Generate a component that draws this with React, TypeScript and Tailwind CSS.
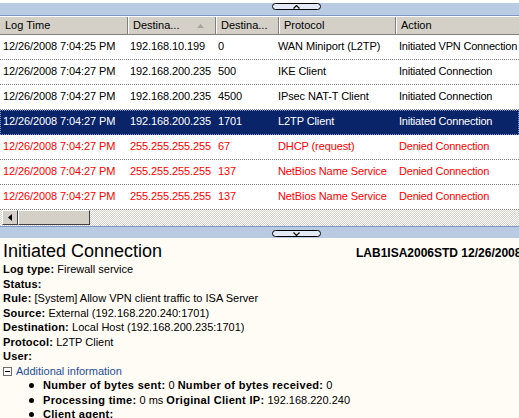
import React from "react";

type Row = {
  time: string;
  dest: string;
  port: string;
  proto: string;
  action: string;
  kind: "normal" | "selected" | "denied";
};

const rows: Row[] = [
  { time: "12/26/2008 7:04:25 PM", dest: "192.168.10.199", port: "0", proto: "WAN Miniport (L2TP)", action: "Initiated VPN Connection", kind: "normal" },
  { time: "12/26/2008 7:04:27 PM", dest: "192.168.200.235", port: "500", proto: "IKE Client", action: "Initiated Connection", kind: "normal" },
  { time: "12/26/2008 7:04:27 PM", dest: "192.168.200.235", port: "4500", proto: "IPsec NAT-T Client", action: "Initiated Connection", kind: "normal" },
  { time: "12/26/2008 7:04:27 PM", dest: "192.168.200.235", port: "1701", proto: "L2TP Client", action: "Initiated Connection", kind: "selected" },
  { time: "12/26/2008 7:04:27 PM", dest: "255.255.255.255", port: "67", proto: "DHCP (request)", action: "Denied Connection", kind: "denied" },
  { time: "12/26/2008 7:04:27 PM", dest: "255.255.255.255", port: "137", proto: "NetBios Name Service", action: "Denied Connection", kind: "denied" },
  { time: "12/26/2008 7:04:27 PM", dest: "255.255.255.255", port: "137", proto: "NetBios Name Service", action: "Denied Connection", kind: "denied" },
];

const details: [string, string][] = [
  ["Log type:", "Firewall service"],
  ["Status:", ""],
  ["Rule:", "[System] Allow VPN client traffic to ISA Server"],
  ["Source:", "External (192.168.220.240:1701)"],
  ["Destination:", "Local Host (192.168.200.235:1701)"],
  ["Protocol:", "L2TP Client"],
  ["User:", ""],
];

const extra: [string, string][][] = [
  [["Number of bytes sent:", "0"], ["Number of bytes received:", "0"]],
  [["Processing time:", "0 ms"], ["Original Client IP:", "192.168.220.240"]],
  [["Client agent:", ""]],
];

function Pill({ up }: { up: boolean }) {
  return (
    <div className="ml-[272px] mt-[3px] flex h-[7px] w-[49px] items-center justify-center rounded-full border border-black bg-[#e3eaf5]">
      <svg width="7" height="4" viewBox="0 0 7 4">
        {up ? (
          <polyline points="0.5,3.5 3.5,0.5 6.5,3.5" fill="none" stroke="#000" strokeWidth="1.2" />
        ) : (
          <polyline points="0.5,0.5 3.5,3.5 6.5,0.5" fill="none" stroke="#000" strokeWidth="1.2" />
        )}
      </svg>
    </div>
  );
}

function HeaderCell({ label, sorted, last }: { label: string; sorted?: boolean; last?: boolean }) {
  return (
    <div
      className={
        "flex items-center pl-[5px] " +
        (last ? "" : "border-r border-r-[#808080] shadow-[1px_0_0_#fff]")
      }
    >
      <span>{label}</span>
      {sorted && (
        <svg width="7" height="4" viewBox="0 0 7 4" className="ml-[18px]">
          <polygon points="0,4 3.5,0 7,4" fill="#a8a49c" />
        </svg>
      )}
    </div>
  );
}

export default function App() {
  return (
    <div className="h-[418px] w-[519px] overflow-hidden bg-white font-['Liberation_Sans',Arial,sans-serif] text-[11px] text-black">
      {/* top splitter */}
      <div className="h-[13px] border-b border-[#7d97c2] bg-[#b9cbe3]">
        <Pill up />
      </div>

      {/* column header */}
      <div className="grid h-[19px] grid-cols-[128px_88px_63px_117px_1fr] border-t border-t-white border-b border-b-[#808080] bg-[#d4d0c8]">
        <HeaderCell label="Log Time" />
        <HeaderCell label="Destina..." sorted />
        <HeaderCell label="Destina..." />
        <HeaderCell label="Protocol" />
        <HeaderCell label="Action" last />
      </div>

      {/* rows */}
      <div className="tracking-[-0.1px]">
        {rows.map((r, i) => (
          <div
            key={i}
            className={
              "grid h-[25px] grid-cols-[127px_88px_60px_121px_1fr] items-center whitespace-nowrap border-b border-dotted pb-[1px] " +
              (r.kind === "selected"
                ? "border-[#8090b0] bg-[#0a246a] text-white outline-1 -outline-offset-1 outline-dotted outline-[#8a96b8]"
                : r.kind === "denied"
                ? "border-[#808080] text-[#ff0000]"
                : "border-[#808080]")
            }
          >
            <span className="pl-[3px]">{r.time}</span>
            <span className="pl-[3px]">{r.dest}</span>
            <span className="pl-[3px]">{r.port}</span>
            <span className="pl-[3px]">{r.proto}</span>
            <span className="pl-[3px] tracking-[-0.2px]">{r.action}</span>
          </div>
        ))}
      </div>

      {/* horizontal scrollbar */}
      <div className="flex h-[16px] bg-[repeating-conic-gradient(#d4d0c8_0_25%,#ffffff_0_50%)] bg-[length:2px_2px] pl-[2px]">
        <div className="flex h-[15px] w-[16px] items-center justify-center border-t border-l border-t-white border-l-white border-r border-b border-r-[#404040] border-b-[#404040] bg-[#d4d0c8]">
          <svg width="4" height="7" viewBox="0 0 4 7">
            <polygon points="4,0 0,3.5 4,7" fill="#000" />
          </svg>
        </div>
        <div className="h-[15px] w-[72px] border-t border-l border-t-white border-l-white border-r border-b border-r-[#404040] border-b-[#404040] bg-[#d4d0c8]" />
      </div>

      {/* bottom splitter */}
      <div className="h-[12px] border-t border-[#7d97c2] bg-[#b9cbe3]">
        <Pill up={false} />
      </div>

      {/* detail pane */}
      <div className="h-[182px] overflow-hidden bg-[#fffbf5] pt-[2px]">
        <div className="flex items-baseline whitespace-nowrap">
          <div className="w-[356px] shrink-0 pl-[3px] text-[18px] leading-[22px]">Initiated Connection</div>
          <div className="shrink-0 text-[12px] font-bold">LAB1ISA2006STD 12/26/2008</div>
        </div>
        <div className="pl-[3px] leading-[14.55px]">
          {details.map(([label, value]) => (
            <div key={label} className="whitespace-nowrap">
              <b className="tracking-[0.2px]">{label}</b> {value}
            </div>
          ))}
          <div className="flex items-center whitespace-nowrap text-[#1f4f9c]">
            <svg width="9" height="9" viewBox="0 0 9 9" className="mr-[4px]">
              <rect x="0.5" y="0.5" width="8" height="8" fill="#fff" stroke="#6b6b6b" />
              <line x1="2" y1="4.5" x2="7" y2="4.5" stroke="#000" />
            </svg>
            Additional information
          </div>
          <ul className="pl-[26px]">
            {extra.map((item, i) => (
              <li key={i} className="flex items-center whitespace-nowrap">
                <span className="mr-[9px] inline-block h-[5px] w-[5px] rounded-full bg-black" />
                {item.map(([l, v], j) => (
                  <span key={j} className={j > 0 ? "ml-[3px]" : ""}>
                    <b className="tracking-[0.3px]">{l}</b> {v}
                  </span>
                ))}
              </li>
            ))}
          </ul>
        </div>
      </div>
    </div>
  );
}
